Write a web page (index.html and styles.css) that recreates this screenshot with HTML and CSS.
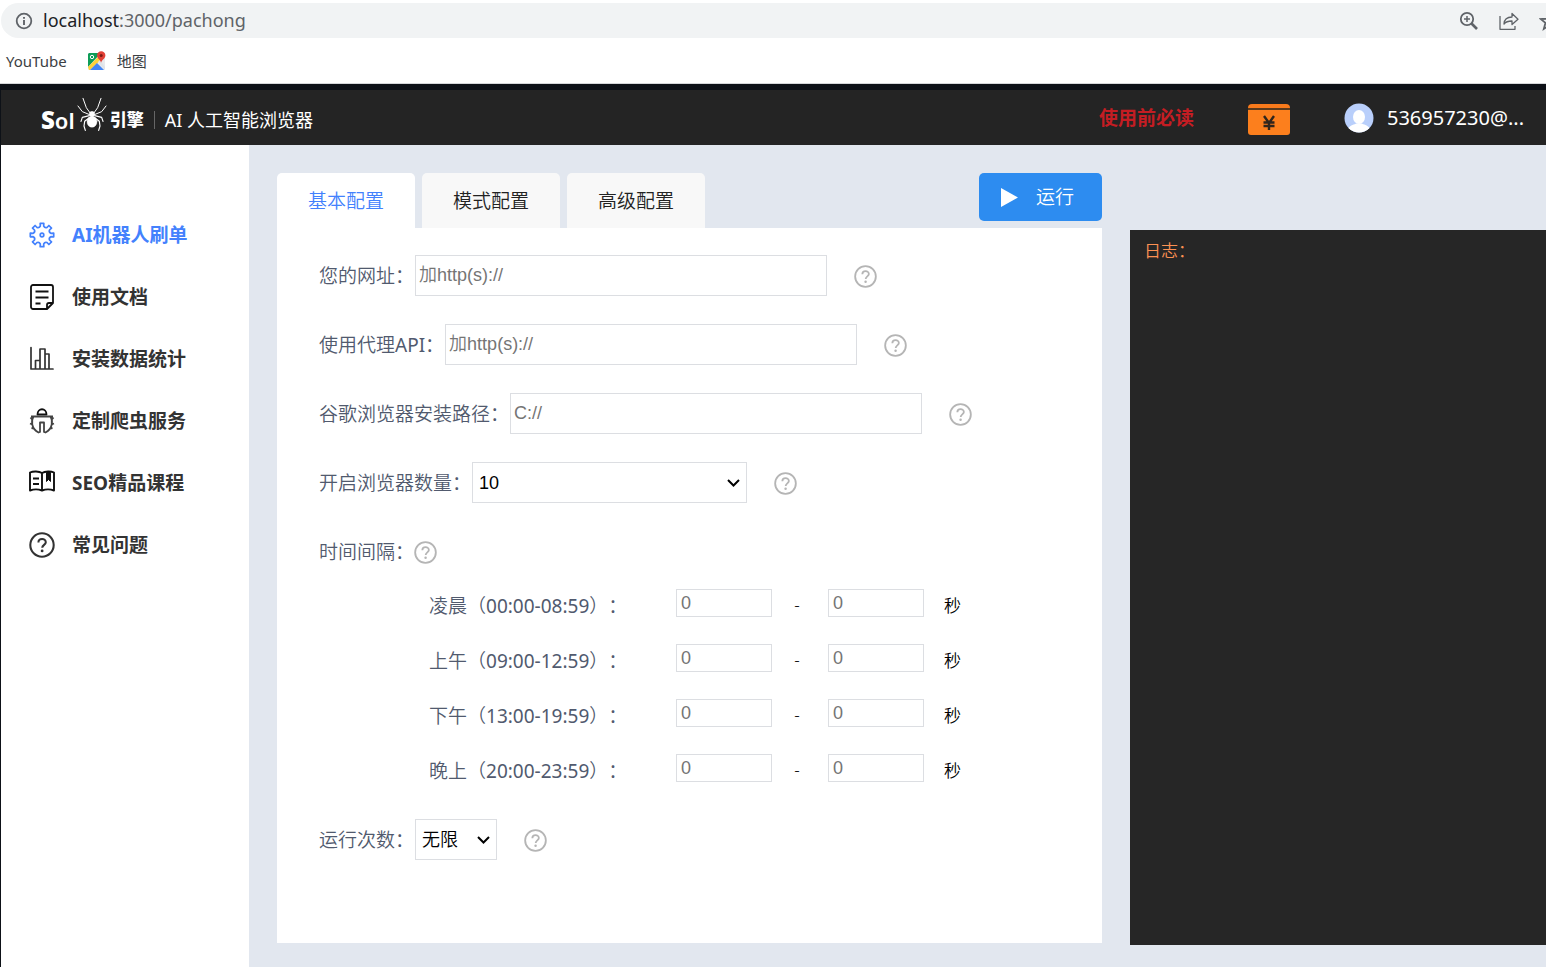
FILE: index.html
```html
<!DOCTYPE html>
<html lang="zh-CN">
<head>
<meta charset="utf-8">
<title>Sol引擎 AI 人工智能浏览器</title>
<link rel="stylesheet" href="styles.css">
</head>
<body>
<svg class="defs" aria-hidden="true">
  <symbol id="help" viewBox="0 0 24 24"><circle cx="12" cy="12" r="10.800" fill="none" stroke="currentColor" stroke-width="1.900"/><path d="M8.700 9.600c0-4.200 6.800-4.100 6.800-.2 0 2.400-3.300 2.600-3.300 5.200" fill="none" stroke="currentColor" stroke-width="1.900"/><circle cx="12.100" cy="17.500" r="1.300" fill="currentColor"/></symbol>
  <symbol id="chevron" viewBox="0 0 13 8"><path d="M1 1l5.500 5.500L12 1" fill="none" stroke="#000" stroke-width="2"/></symbol>
</svg>
<div class="browser">
  <div class="address">
    <svg class="info" viewBox="0 0 18 18"><circle cx="9" cy="9" r="7.300" fill="none" stroke="currentColor" stroke-width="1.800"/><path d="M9 8v5M9 5v1.800" stroke="currentColor" stroke-width="1.900"/></svg>
    <div class="url"><span class="host">localhost</span>:3000/pachong</div>
    <div class="tools">
      <button class="tool" aria-label="缩放"><svg viewBox="0 0 20 20"><circle cx="8" cy="8" r="6.200" fill="none" stroke="currentColor" stroke-width="1.800"/><path d="M8 5v6M5 8h6" stroke="currentColor" stroke-width="1.500"/><path d="M12.500 12.500l5.500 5.500" stroke="currentColor" stroke-width="2.600"/></svg></button>
      <button class="tool" aria-label="分享"><svg viewBox="0 0 20 20" fill="none" stroke="currentColor" stroke-width="1.300"><path d="M1 5v13.300h15V15M5 13c.3-4.500 3-7 8-7V2.500l6 5.700-6 5.300v-3.500c-4 0-6.300.8-8 3z" stroke-linejoin="round"/></svg></button>
      <button class="tool" aria-label="收藏"><svg viewBox="0 0 20 20"><path d="M10 2l2.200 5.700 6.200.3-4.800 3.900 1.600 6-5.200-3.400-5.200 3.400 1.600-6L1.600 8l6.200-.3z" fill="none" stroke="currentColor" stroke-width="1.800"/></svg></button>
    </div>
  </div>
  <nav class="bookmarks">
    <a href="#">YouTube</a>
    <a href="#"><svg class="maps" viewBox="0 0 20 20"><rect x="1" y="2" width="17" height="17" rx="1.500" fill="#e8eaed"/><path d="M2 2h12L1 16V3z" fill="#0f9d58"/><path d="M1 16L14 3l2 4L3 19H2z" fill="#fdd13a"/><path d="M3 19l7-7 7 7z" fill="#4285f4"/><path d="M11 11l2-2 5 7v3z" fill="#dfe3e8"/><circle cx="5" cy="6" r="1.700" fill="none" stroke="#fff"/><path d="M14 12c0-3-4-4.500-4-7.500a4.200 4.200 0 018.400 0C18.400 7.500 14.500 9 14 12z" fill="#e24035"/><circle cx="14.200" cy="4.500" r="1.500" fill="#7b1b14"/></svg>地图</a>
  </nav>
</div>
<div class="app">
  <header class="header">
    <div class="logo">
      <span class="sol"><b>S</b>ol</span>
      <svg class="spider" viewBox="170 18 90 105" fill="none" stroke="#fff" stroke-linecap="round" stroke-linejoin="round"><path d="M210 67L198 50 188 22M220 67l12-17 10-28M208 71l-22-9-13-17M222 71l22-9 13-17" stroke-width="3"/><path d="M207 74l-21 5-4 12M223 74l21 5 4 12M207 80l-14 11-2 14 4 13M223 80l14 11 2 14-4 13" stroke-width="3.500"/><ellipse cx="215" cy="92" rx="15" ry="17" fill="#fff"/><ellipse cx="215" cy="69" rx="8" ry="8" fill="#fff"/></svg>
      <span class="engine">引擎</span>
      <span class="tagline">AI 人工智能浏览器</span>
    </div>
    <div class="account">
      <a class="notice" href="#">使用前必读</a>
      <a class="wallet" href="#" aria-label="充值"><svg viewBox="0 0 42 31"><path d="M0 4a4 4 0 014-4h34a4 4 0 014 4z" fill="#f97a1b"/><path d="M0 4h42v2H0z" fill="#5a3a1c"/><path d="M0 6h42v22a3 3 0 01-3 3H3a3 3 0 01-3-3z" fill="#fc7f1d"/><path d="M16 12l5 7 5-7M21 19v7M15.500 18.500h11M15.500 22h11" fill="none" stroke="#30251c" stroke-width="2.400"/></svg></a>
      <a class="user" href="#"><svg viewBox="0 0 30 30"><circle cx="15" cy="15" r="14.500" fill="#b9cffb"/><ellipse cx="15" cy="14" rx="6" ry="7" fill="#fff"/><path d="M4.500 25c2-3 6-3.500 8-4.500h5c2 1 6 1.500 8 4.500a14.500 14.500 0 01-21 0z" fill="#fff"/></svg>536957230@...</a>
    </div>
  </header>
  <div class="body">
    <nav class="sidebar">
      <a class="item active" href="#"><svg viewBox="0 0 26 26" fill="none" stroke="currentColor" stroke-width="1.700" stroke-linejoin="round"><path d="M11.300 4.200L11.200 1.300H14.800L14.700 4.200Q15.800 6.300 18 5.500L19.900 3.500 22.500 6.100 20.500 8Q19.700 10.200 21.800 11.300L24.700 11.200V14.800L21.800 14.700Q19.700 15.800 20.500 18L22.500 19.900 19.900 22.500 18 20.500Q15.800 19.700 14.700 21.800L14.800 24.700H11.200L11.300 21.800Q10.200 19.700 8 20.500L6.100 22.500 3.500 19.900 5.500 18Q6.300 15.800 4.200 14.700L1.300 14.800V11.200L4.200 11.300Q6.300 10.200 5.500 8L3.500 6.100 6.100 3.500 8 5.500Q10.200 6.300 11.300 4.200z"/><circle cx="13" cy="13" r="1.800"/></svg>AI机器人刷单</a>
      <a class="item" href="#"><svg viewBox="0 0 26 26" fill="none" stroke="#111" stroke-width="1.800" stroke-linejoin="round"><path d="M18 25H4a2 2 0 01-2-2V3a2 2 0 012-2h18a2 2 0 012 2v16zM18 25v-4a2 2 0 012-2h4M6.500 7.500h13M6.500 13.500h13M6.500 19.500h5"/></svg>使用文档</a>
      <a class="item" href="#"><svg viewBox="0 0 26 26" fill="none" stroke="#333" stroke-width="1.700" stroke-linecap="round" stroke-linejoin="round"><path d="M2 1.500V23h22M6.500 23V14.500H11M11 23V3h5v20M16 8h4v15"/></svg>安装数据统计</a>
      <a class="item" href="#"><svg viewBox="0 0 26 26" fill="none" stroke="#444" stroke-width="1.800" stroke-linejoin="round"><path d="M8.500 6.500c0-7 9-7 9 0z" stroke="#111"/><path d="M2 8.500h22M4.500 8.500c-2.500 4-2.500 12 5 16l1.500-.5V14.500h4V24l1.500.5c7.500-4 7.500-12 5-16M1.500 9.500l2 2.500M24.500 9.500l-2 2.500M1 15.500l2.500 1M25 15.500l-2.500 1M2.500 20l2.500.5M23.500 20l-2.500.5"/></svg>定制爬虫服务</a>
      <a class="item" href="#"><svg viewBox="0 0 26 26" fill="none" stroke="#111" stroke-width="1.900" stroke-linejoin="round"><path d="M13 3C10 1 4 1 1 2.500v18c4-1.500 8-1.500 12 0 4-1.500 8-1.500 12 0v-18C22 1 16 1 13 3zM13 3v17.500M4 8.500h6M4 14h6"/><path d="M17.500 2.500h4v9l-2-2-2 2z" fill="#111" stroke-width="1"/></svg>SEO精品课程</a>
      <a class="item" href="#"><svg viewBox="0 0 24 24"><use href="#help"/></svg>常见问题</a>
    </nav>
    <main class="main">
      <section class="config">
        <div class="top">
          <div class="tabs">
            <button class="tab selected">基本配置</button>
            <button class="tab">模式配置</button>
            <button class="tab">高级配置</button>
          </div>
          <button class="run"><svg viewBox="0 0 17 19"><path d="M0 0l17 9.500L0 19z" fill="#fff"/></svg>运行</button>
        </div>
        <form class="panel">
          <div class="row"><label for="site">您的网址：</label><input class="field" id="site" placeholder="加http(s)://"><svg class="help"><use href="#help"/></svg></div>
          <div class="row"><label for="proxy">使用代理<span class="latin">API</span>：</label><input class="field" id="proxy" placeholder="加http(s)://"><svg class="help"><use href="#help"/></svg></div>
          <div class="row"><label for="path">谷歌浏览器安装路径：</label><input class="field" id="path" placeholder="C://"><svg class="help"><use href="#help"/></svg></div>
          <div class="row"><label for="count">开启浏览器数量：</label><div class="picker"><select class="field count" id="count"><option>10</option></select><svg class="chevron"><use href="#chevron"/></svg></div><svg class="help"><use href="#help"/></svg></div>
          <div class="row heading"><span>时间间隔：</span><svg class="help"><use href="#help"/></svg></div>
          <div class="intervals">
            <div class="interval"><label for="a1">凌晨（<span class="latin">00:00-08:59</span>）：</label><input class="num" id="a1" placeholder="0"><span class="dash">-</span><input class="num" aria-label="凌晨最大秒数" placeholder="0"><span class="unit">秒</span></div>
            <div class="interval"><label for="b1">上午（<span class="latin">09:00-12:59</span>）：</label><input class="num" id="b1" placeholder="0"><span class="dash">-</span><input class="num" aria-label="上午最大秒数" placeholder="0"><span class="unit">秒</span></div>
            <div class="interval"><label for="c1">下午（<span class="latin">13:00-19:59</span>）：</label><input class="num" id="c1" placeholder="0"><span class="dash">-</span><input class="num" aria-label="下午最大秒数" placeholder="0"><span class="unit">秒</span></div>
            <div class="interval"><label for="d1">晚上（<span class="latin">20:00-23:59</span>）：</label><input class="num" id="d1" placeholder="0"><span class="dash">-</span><input class="num" aria-label="晚上最大秒数" placeholder="0"><span class="unit">秒</span></div>
          </div>
          <div class="row"><label for="times">运行次数：</label><div class="picker"><select class="field times" id="times"><option>无限</option></select><svg class="chevron"><use href="#chevron"/></svg></div><svg class="help"><use href="#help"/></svg></div>
        </form>
      </section>
      <aside class="log">日志：</aside>
    </main>
  </div>
</div>
</body>
</html>
```
FILE: styles.css
```css
* { box-sizing: border-box; }

body {
  margin: 0;
  min-height: 100vh;
  display: flex;
  flex-direction: column;
  overflow-x: hidden;
  background: #fff;
  color: #515a6e;
  font: 350 19px/28px "Noto Sans", "Noto Sans CJK SC", sans-serif;
  text-spacing-trim: space-all;
}

a { color: inherit; text-decoration: none; }
button { border: 0; padding: 0; background: none; color: inherit; font: inherit; cursor: pointer; }
svg { display: block; flex: none; }
.defs { position: absolute; width: 0; height: 0; }
.latin { font-weight: 400; }

/* Browser chrome */
.browser { padding-top: 3px; border-bottom: 1px solid #d5d7da; font-weight: 400; }
.address {
  display: flex;
  align-items: center;
  height: 35px;
  margin-left: 1px;
  padding-left: 14px;
  border-radius: 18px 0 0 18px;
  background: #f1f3f4;
  color: #5f6368;
  overflow: hidden;
}
.info { width: 18px; height: 18px; }
.url { margin-left: 10px; padding-bottom: 1px; font-size: 18px; }
.host { color: #202124; }
.tools { display: flex; gap: 20px; margin-left: auto; margin-right: -13px; }
.tool, .tool svg { width: 20px; height: 20px; }
.bookmarks {
  display: flex;
  align-items: center;
  gap: 20px;
  height: 45px;
  padding-left: 6px;
  color: #3c4043;
  font-size: 15px;
}
.bookmarks a { display: flex; align-items: center; }
.maps { width: 20px; height: 20px; margin-right: 10px; }

/* Application frame */
.app {
  flex: 1;
  display: flex;
  flex-direction: column;
  border-top: 6px solid #0d1117;
  border-left: 1px solid #0d1117;
}
.header {
  display: flex;
  align-items: center;
  justify-content: space-between;
  height: 55px;
  padding: 0 22px 0 40px;
  background: #242424;
  color: #fff;
}
.logo { display: flex; align-items: flex-end; height: 42px; padding-bottom: 5px; }
.sol { font-size: 22px; font-weight: 600; }
.sol b { font-size: 24px; font-weight: 900; }
.spider { width: 30px; height: 35px; margin: 0 3px 2px 2px; }
.engine { font-size: 17px; font-weight: 900; }
.tagline {
  display: flex;
  align-items: center;
  height: 18px;
  margin: 0 0 5px 10px;
  padding-left: 10px;
  border-left: 1px solid #666;
  font-size: 18px;
  font-weight: 400;
}
.account { display: flex; align-items: center; font-weight: 400; }
.notice { color: #c51d23; font-weight: 700; }
.wallet { margin: 3px 54px 0; }
.wallet svg { width: 42px; height: 31px; }
.user { display: flex; align-items: center; gap: 13px; font-size: 20px; }
.user svg { width: 30px; height: 30px; }

.body { flex: 1; display: flex; }
.sidebar {
  flex: none;
  display: flex;
  flex-direction: column;
  gap: 34px;
  width: 248px;
  padding: 76px 0 0 28px;
  background: #fff;
}
.item { display: flex; align-items: center; gap: 17px; color: #333; font-weight: 700; }
.item svg { width: 26px; height: 26px; }
.item.active { color: #4381fd; }

.main {
  flex: 1;
  display: grid;
  grid-template-columns: minmax(0, 825fr) minmax(0, 416fr);
  gap: 28px;
  padding: 28px 0 22px 28px;
  background: #e2e7ef;
}
.config { display: flex; flex-direction: column; padding-bottom: 2px; }
.top { display: flex; justify-content: space-between; align-items: flex-start; }
.tabs { display: flex; gap: 7px; }
.tab {
  width: 138px;
  height: 55px;
  border-radius: 5px 5px 0 0;
  background: #f8f8f8;
  color: #222;
}
.tab.selected { background: #fff; color: #4381fd; }
.run {
  display: flex;
  align-items: center;
  gap: 18px;
  width: 123px;
  height: 48px;
  padding-left: 22px;
  border-radius: 5px;
  background: #2d8cf0;
  color: #fff;
}
.run svg { width: 17px; height: 19px; }

/* Settings form */
.panel {
  flex: 1;
  display: flex;
  flex-direction: column;
  gap: 28px;
  padding: 27px 42px;
  background: #fff;
}
.row { display: flex; align-items: center; height: 41px; }
.field, .num {
  border: 1px solid #dcdee2;
  border-radius: 0;
  background: #fff;
  font: 350 18px "Liberation Sans", "Noto Sans CJK SC", sans-serif;
}
.field { width: 412px; height: 41px; margin-left: 1px; padding: 0 3px; }
.field::placeholder, .num::placeholder { color: #757575; }
.picker { position: relative; }
.picker .field { display: block; appearance: none; padding: 0 6px; color: #000; }
.field.count { width: 275px; }
.field.times { width: 82px; }
.chevron {
  position: absolute;
  top: 17px;
  right: 7px;
  width: 13px;
  height: 8px;
  pointer-events: none;
}
.help { width: 23px; height: 23px; margin: 2px 0 0 27px; color: #b5b5b5; }
.heading .help { margin-left: 0; }
.intervals { display: flex; flex-direction: column; gap: 27px; margin: -11px 0 9px 110px; }
.interval { display: flex; align-items: center; height: 28px; }
.interval label { width: 247px; padding-top: 5px; }
.num { width: 96px; height: 28px; padding: 0 4px; }
.dash { width: 56px; padding: 3px 6px 0 0; text-align: center; color: #000; font-size: 17px; }
.unit { margin-left: 20px; padding-top: 5px; color: #000; font-size: 17px; }

.log {
  margin-top: 57px;
  padding: 7px 14px;
  background: #262626;
  color: #fc9153;
  font-size: 17px;
}
```
